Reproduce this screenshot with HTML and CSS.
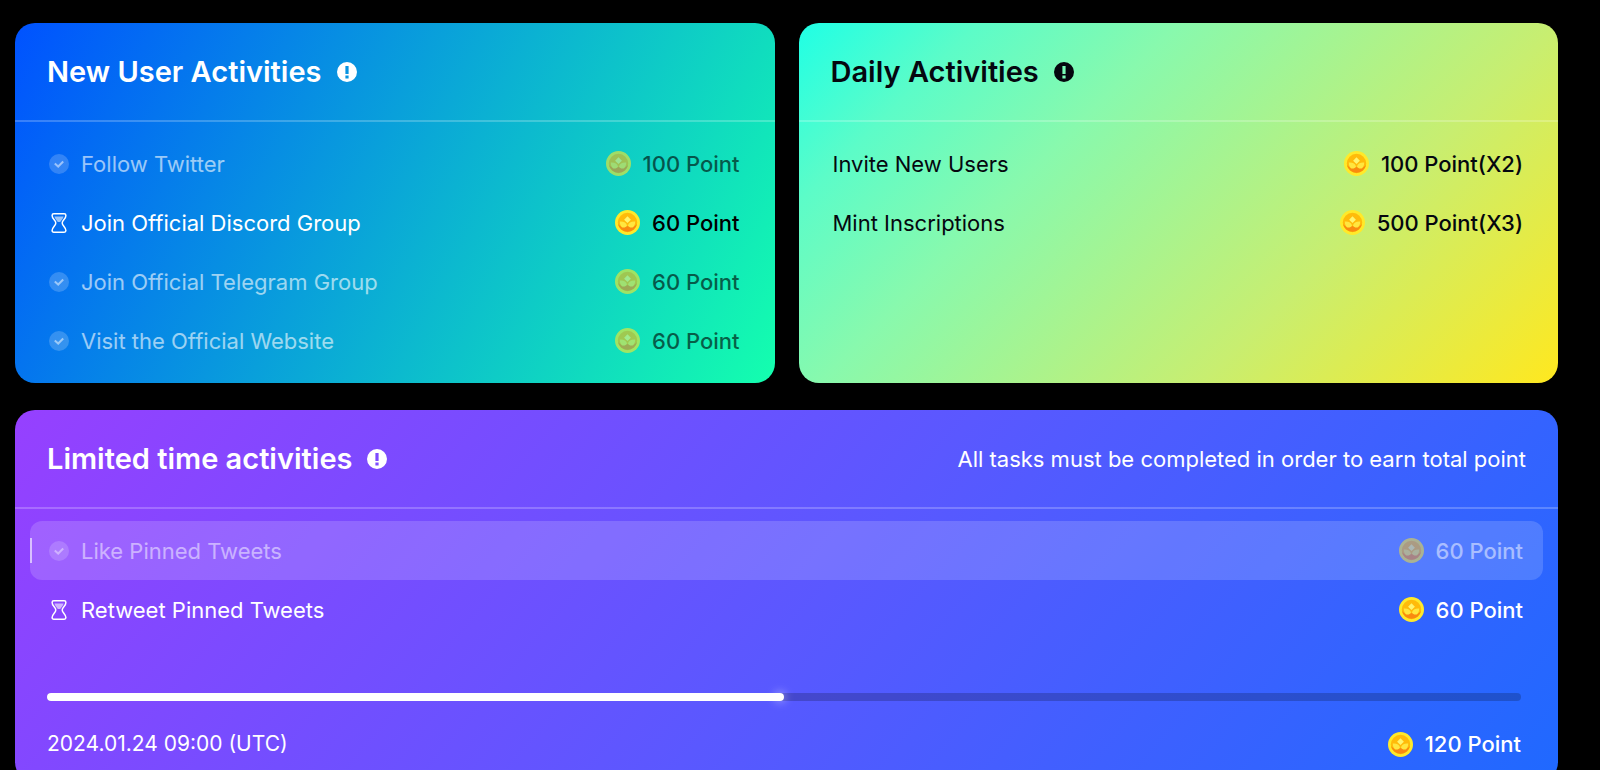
FILE: index.html
```html
<!DOCTYPE html>
<html lang="en">
<head>
<meta charset="utf-8">
<title>Activities</title>
<link rel="stylesheet" href="styles.css">
</head>
<body>
<svg class="sprite" aria-hidden="true">
  <symbol id="info" viewBox="0 0 20 20">
    <path fill="currentColor" fill-rule="evenodd" d="M10 0a10 10 0 1 0 0 20a10 10 0 0 0 0-20zM8.400 4h3.200v8H8.400zM8.400 13.600h3.200v2.800H8.400z"/>
  </symbol>
  <symbol id="done" viewBox="0 0 20 20">
    <circle cx="10" cy="10" r="10" fill="#fff" fill-opacity=".32"/>
    <path d="M5.800 9.400l3.400 3.100l5-5" fill="none" stroke="#fff" stroke-width="2"/>
  </symbol>
  <symbol id="pending" viewBox="0 0 20 20">
    <path d="M5.400 3.400h9.200c-.4 2.400-2.400 3.600-3.400 5.600h-2.400c-1-2-3-3.200-3.400-5.600z" fill="#fff" fill-opacity=".6"/>
    <path d="M4.800 .8h10.400q1.700 0 1.700 1.600c0 3.600-3.700 5-3.700 7.600s3.700 4 3.700 7.600q0 1.600-1.700 1.600H4.800q-1.700 0-1.700-1.600c0-3.600 3.700-5 3.700-7.600S3.100 6 3.100 2.400Q3.100 .8 4.800 .8z" fill="none" stroke="#fff" stroke-width="1.500"/>
  </symbol>
  <symbol id="coin" viewBox="0 0 25 25">
    <circle cx="12.500" cy="12.500" r="12.500" fill="#ffe92a"/>
    <circle cx="12.500" cy="12.500" r="9.700" fill="#ffbb0a"/>
    <path d="M3 14a9.700 9.700 0 0 0 19 0l-4 3.500l-5.500-1.500l-5.500 1.500z" fill="#f98a10"/>
    <path d="M12.500 6.300l3.400 3.400l-3.400 3.400l-3.400-3.400z" fill="#fff46e"/>
    <path d="M4.800 11.600c4-.3 6.500 1 7.200 3.900c-1 1.900-2.800 2.500-4.400 1.900c-1.900-.7-2.800-2.800-2.800-5.800z" fill="#ffe640"/>
    <path d="M20.200 11.600c-4-.3-6.500 1-7.200 3.900c1 1.900 2.800 2.500 4.400 1.900c1.900-.7 2.800-2.800 2.800-5.800z" fill="#ffe640"/>
  </symbol>
</svg>
<main class="board">
  <section class="card card-new">
    <header class="card-head">
      <h2 class="title">New User Activities</h2>
      <button class="info" type="button" aria-label="About new user activities"><svg class="icon"><use href="#info"/></svg></button>
    </header>
    <ul class="tasks">
      <li class="task done"><svg class="icon"><use href="#done"/></svg><span class="name">Follow Twitter</span><span class="reward"><svg class="coin"><use href="#coin"/></svg>100 Point</span></li>
      <li class="task"><svg class="icon"><use href="#pending"/></svg><span class="name">Join Official Discord Group</span><span class="reward"><svg class="coin"><use href="#coin"/></svg>60 Point</span></li>
      <li class="task done"><svg class="icon"><use href="#done"/></svg><span class="name">Join Official Telegram Group</span><span class="reward"><svg class="coin"><use href="#coin"/></svg>60 Point</span></li>
      <li class="task done"><svg class="icon"><use href="#done"/></svg><span class="name">Visit the Official Website</span><span class="reward"><svg class="coin"><use href="#coin"/></svg>60 Point</span></li>
    </ul>
  </section>

  <section class="card card-daily">
    <header class="card-head">
      <h2 class="title">Daily Activities</h2>
      <button class="info" type="button" aria-label="About daily activities"><svg class="icon"><use href="#info"/></svg></button>
    </header>
    <ul class="tasks">
      <li class="task"><span class="name">Invite New Users</span><span class="reward"><svg class="coin"><use href="#coin"/></svg>100 Point(X2)</span></li>
      <li class="task"><span class="name">Mint Inscriptions</span><span class="reward"><svg class="coin"><use href="#coin"/></svg>500 Point(X3)</span></li>
    </ul>
  </section>

  <section class="card card-limited">
    <header class="card-head">
      <h2 class="title">Limited time activities</h2>
      <button class="info" type="button" aria-label="About limited time activities"><svg class="icon"><use href="#info"/></svg></button>
      <p class="note">All tasks must be completed in order to earn total point</p>
    </header>
    <ul class="tasks">
      <li class="task done active"><svg class="icon"><use href="#done"/></svg><span class="name">Like Pinned Tweets</span><span class="reward"><svg class="coin"><use href="#coin"/></svg>60 Point</span></li>
      <li class="task"><svg class="icon"><use href="#pending"/></svg><span class="name">Retweet Pinned Tweets</span><span class="reward"><svg class="coin"><use href="#coin"/></svg>60 Point</span></li>
    </ul>
    <div class="summary">
      <div class="track" role="progressbar" aria-label="Tasks completed" aria-valuenow="50" aria-valuemin="0" aria-valuemax="100"><div class="fill" style="width:50%"></div></div>
      <div class="totals"><time class="date" datetime="2024-01-24T09:00Z">2024.01.24 09:00 (UTC)</time><span class="reward"><svg class="coin"><use href="#coin"/></svg>120 Point</span></div>
    </div>
  </section>
</main>
</body>
</html>
```
FILE: styles.css
```css
* { box-sizing: border-box; }

body {
  margin: 0;
  height: 100vh;
  overflow: hidden;
  background: #000;
  font-family: Inter, Roboto, sans-serif;
  font-size: 22px;
  line-height: 28px;
  color: #fff;
}

.sprite { position: absolute; width: 0; height: 0; }

.board {
  display: grid;
  grid-template-columns: 1fr 1fr;
  gap: 27px 24px;
  padding: 23px 42px 23px 15px;
}

.card { border-radius: 20px; overflow: hidden; }
.card-new { background: linear-gradient(118deg, #0052ff, #14ffae); }
.card-daily {
  background: linear-gradient(135deg, #1fffe5, #5cfcc8 16%, #88f9ad 34%, #c8ee70 68%, #ffe81f);
  color: #05070f;
}
.card-limited {
  grid-column: 1 / -1;
  padding-bottom: 24px;
  background: linear-gradient(130deg, #9640ff, #5a58ff 52%, #1f69ff);
}

.card-head {
  display: flex;
  align-items: center;
  gap: 15px;
  height: 99px;
  padding: 0 32px;
  border-bottom: 2px solid rgba(255, 255, 255, .22);
}

.title { margin: 0; font-size: 29px; line-height: 36px; font-weight: 600; }

.info {
  display: flex;
  padding: 0;
  border: 0;
  background: none;
  color: inherit;
  cursor: pointer;
}

.note { margin: 0 0 0 auto; }

.icon { display: block; flex: none; width: 20px; height: 20px; }
.coin { display: block; flex: none; width: 25px; height: 25px; }

.tasks { margin: 0; padding: 12px 15px 13px; list-style: none; }

.task {
  position: relative;
  display: flex;
  align-items: center;
  gap: 12px;
  height: 59px;
  padding: 0 20px 0 19px;
  border-radius: 12px;
}

.reward {
  display: flex;
  align-items: center;
  gap: 12px;
  margin-left: auto;
  font-weight: 500;
}

.card-new .reward { color: #000; }
.done .name,
.done .icon,
.done .reward { opacity: .6; }

.active { background: rgba(255, 255, 255, .16); }
.active .name,
.active .icon,
.active .reward { opacity: .5; }
.active::before {
  content: "";
  position: absolute;
  left: 0;
  top: 17px;
  width: 2px;
  height: 25px;
  background: rgba(255, 255, 255, .6);
}

.summary { padding: 41px 37px 0 32px; }
.track { height: 8px; border-radius: 4px; background: rgba(0, 0, 0, .2); }
.fill {
  position: relative;
  height: 8px;
  border-radius: 4px;
  background: #fff;
}
.fill::after {
  content: "";
  position: absolute;
  right: 0;
  top: 0;
  width: 8px;
  height: 8px;
  border-radius: 4px;
  box-shadow: 0 0 10px 1px rgba(255, 255, 255, .5);
}
.totals { display: flex; align-items: center; margin-top: 29px; }
.date { font-size: 21px; }
```
